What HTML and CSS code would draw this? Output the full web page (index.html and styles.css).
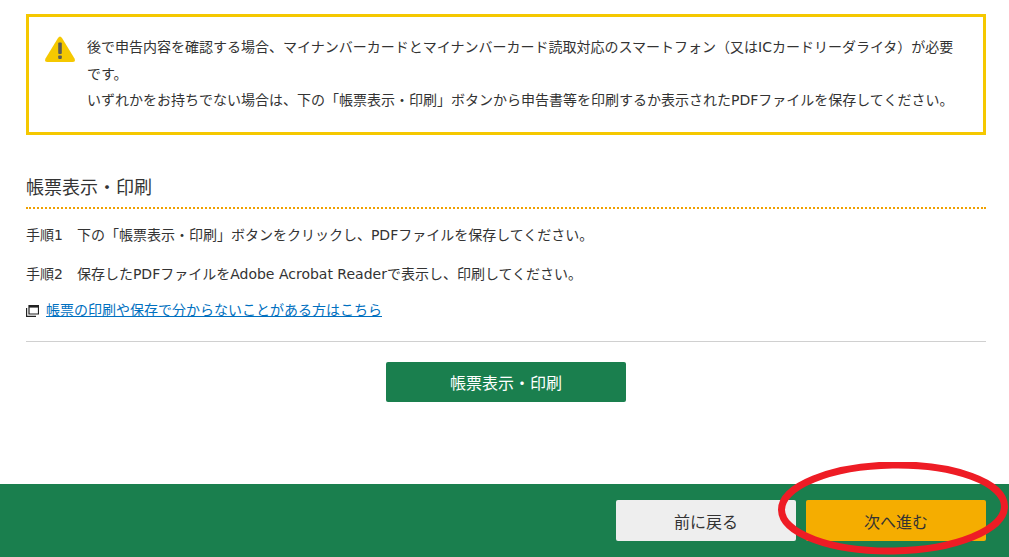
FILE: index.html
```html
<!DOCTYPE html>
<html lang="ja">
<head>
<meta charset="utf-8">
<title>帳票表示・印刷</title>
<link rel="stylesheet" href="styles.css">
</head>
<body>
<main class="content">
  <section class="alert">
    <svg class="alert-icon" width="32" height="28" viewBox="0 0 32 28" aria-hidden="true">
      <path d="M16 1.5 Q17 1.5 18 3 L30.5 23.5 Q32 27 28.5 27 L3.5 27 Q0 27 1.5 23.5 L14 3 Q15 1.5 16 1.5Z" fill="#f5c800"/>
      <rect x="14.2" y="7.5" width="3.6" height="11.5" rx="1" fill="#5a5a5a"/>
      <rect x="14.2" y="20.5" width="3.6" height="3.4" rx="0.8" fill="#5a5a5a"/>
    </svg>
    <div class="alert-text">
      <p>後で申告内容を確認する場合、マイナンバーカードとマイナンバーカード読取対応のスマートフォン（又はICカードリーダライタ）が必要です。</p>
      <p>いずれかをお持ちでない場合は、下の「帳票表示・印刷」ボタンから申告書等を印刷するか表示されたPDFファイルを保存してください。</p>
    </div>
  </section>
  <h2 class="heading">帳票表示・印刷</h2>
  <p class="step">手順1　下の「帳票表示・印刷」ボタンをクリックし、PDFファイルを保存してください。</p>
  <p class="step step-second">手順2　保存したPDFファイルをAdobe Acrobat Readerで表示し、印刷してください。</p>
  <p class="help">
    <svg class="window-icon" width="13" height="12" viewBox="0 0 13 12" aria-hidden="true">
      <path d="M3 .5h9.500v8.500H3z" fill="none" stroke="#222" stroke-width="1.2"/>
      <path d="M3 1h9.500v1.600H3z" fill="#222"/>
      <path d="M.6 3v8.400h9.400" fill="none" stroke="#222" stroke-width="1.2"/>
    </svg>
    <a href="#">帳票の印刷や保存で分からないことがある方はこちら</a>
  </p>
  <hr class="rule">
  <div class="action"><button class="btn btn-print" type="button">帳票表示・印刷</button></div>
</main>
<footer class="footer">
  <button class="btn btn-back" type="button">前に戻る</button>
  <button class="btn btn-next" type="button">次へ進む</button>
</footer>
<svg class="marker" width="240" height="100" viewBox="0 0 240 100" aria-hidden="true">
  <ellipse cx="115" cy="46" rx="111.500" ry="43" fill="none" stroke="#ee1c25" stroke-width="7" transform="rotate(-1 115 46)"/>
</svg>
</body>
</html>
```
FILE: styles.css
```css
* { box-sizing: border-box; }
html, body { margin: 0; padding: 0; }
body {
  position: relative;
  width: 1009px;
  height: 557px;
  overflow: hidden;
  background: #fff;
  color: #333;
  font-family: "DejaVu Sans", "Noto Sans CJK JP", sans-serif;
  font-size: 14px;
  display: flex;
  flex-direction: column;
}
p { margin: 0; }
.content { flex: 1; padding: 14px 23px 0 26px; }
.alert {
  height: 121px;
  border: 3px solid #f5c800;
  padding: 17px 23px 0 15px;
  display: flex;
  gap: 11px;
}
.alert-icon { flex: none; margin-top: 1px; }
.alert-text { line-height: 26.5px; }
.heading {
  margin: 40px 0 0;
  height: 34px;
  border-bottom: 2px dotted #f0a000;
  font-size: 18px;
  font-weight: 400;
  line-height: 26px;
}
.step { margin-top: 16px; line-height: 20px; }
.step-second { margin-top: 19px; }
.help { margin-top: 16px; line-height: 20px; display: flex; align-items: center; gap: 7px; }
.window-icon { flex: none; margin-top: 2px; }
.help a { color: #0070c0; }
.rule { margin: 21px 0 0; border: 0; border-top: 1px solid #d0d0d0; }
.action { margin-top: 20px; display: flex; justify-content: center; }
.btn {
  border: 0;
  border-radius: 2px;
  font: inherit;
  font-size: 16px;
  padding: 0;
}
.btn-print { width: 240px; height: 40px; background: #1a7f4e; color: #fff; }
.footer {
  height: 73px;
  background: #1a7f4e;
  padding: 16px 23px 0 0;
  display: flex;
  justify-content: flex-end;
  gap: 10px;
}
.btn-back { width: 180px; height: 41px; background: #eeeeee; color: #333; }
.btn-next { width: 180px; height: 41px; background: #f5ad00; color: #333; }
.marker { position: absolute; left: 778px; top: 462px; }
```
